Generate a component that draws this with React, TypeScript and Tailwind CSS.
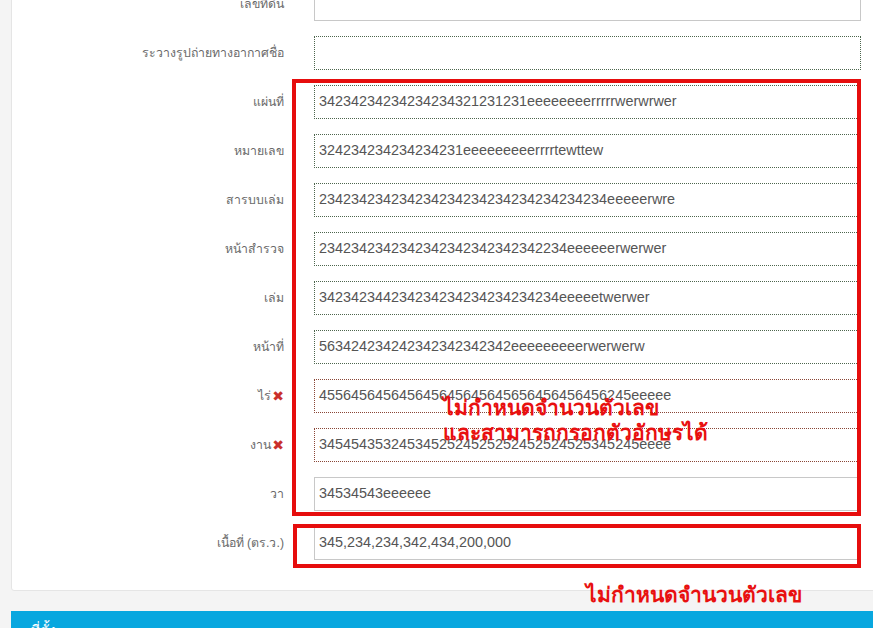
import React from "react";

type Row = { label: string; value: string; kind: "solid" | "green" | "brown"; req?: boolean };

const rows: Row[] = [
  { label: "เลขที่ดิน", value: "", kind: "solid" },
  { label: "ระวางรูปถ่ายทางอากาศชื่อ", value: "", kind: "green" },
  { label: "แผ่นที่", value: "34234234234234234321231231eeeeeeeerrrrrwerwrwer", kind: "green" },
  { label: "หมายเลข", value: "324234234234234231eeeeeeeeerrrrtewttew", kind: "green" },
  { label: "สารบบเล่ม", value: "234234234234234234234234234234234234eeeeerwre", kind: "green" },
  { label: "หน้าสำรวจ", value: "2342342342342342342342342342234eeeeeerwerwer", kind: "green" },
  { label: "เล่ม", value: "342342344234234234234234234234eeeeetwerwer", kind: "green" },
  { label: "หน้าที่", value: "563424234242342342342342eeeeeeeeerwerwerw", kind: "green" },
  { label: "ไร่", value: "455645645645645645645645656456456456245eeeee", kind: "brown", req: true },
  { label: "งาน", value: "3454543532453452524525252452524525345245eeee", kind: "brown", req: true },
  { label: "วา", value: "34534543eeeeee", kind: "solid" },
  { label: "เนื้อที่ (ตร.ว.)", value: "345,234,234,342,434,200,000", kind: "solid" },
];

const borderFor = (k: Row["kind"]) =>
  k === "solid"
    ? "border border-solid border-[#c8c8c8]"
    : k === "green"
    ? "border border-dotted border-[#4d654d]"
    : "border border-dotted border-[#8a4636]";

export default function App() {
  return (
    <div
      className="relative w-[873px] h-[628px] overflow-hidden bg-[#f4f4f4]"
      style={{ fontFamily: '"Liberation Sans", "Noto Sans", Arial, sans-serif' }}
    >
      <div className="ml-[11px] -mt-[14px] w-[900px] bg-white border border-[#e5e5e5] rounded-[3px] pb-[30px]">
        <div className="flex flex-col gap-[15px]">
          {rows.map((r, i) => (
            <div key={i} className="flex items-center h-[34px]">
              <div className="w-[272px] shrink-0 text-right text-[12.3px] text-[#6a6a6a] flex justify-end items-center">
                <span>{r.label}</span>
                {r.req && (
                  <span
                    className="text-[#c9302c] text-[14px] font-bold leading-none ml-[1px]"
                    style={{ fontFamily: '"DejaVu Sans", sans-serif' }}
                  >
                    ✖
                  </span>
                )}
              </div>
              <div
                className={`ml-[30px] w-[547px] h-[34px] shrink-0 bg-white flex items-center px-[4px] text-[14.4px] text-[#555] ${borderFor(
                  r.kind
                )}`}
              >
                {r.value}
              </div>
            </div>
          ))}
        </div>
      </div>
      <div className="ml-[11px] mt-[20px] w-[900px] h-[40px] bg-[#08a7df] pl-[20px] pt-[9px] text-white text-[14px]">
        ที่ตั้ง
      </div>

      {/* annotation overlays */}
      <div className="absolute left-[292px] top-[79px] w-[569px] h-[437px] border-[4px] border-[#e60d0d]" />
      <div className="absolute left-[293px] top-[524px] w-[568px] h-[44px] border-[4px] border-[#e60d0d]" />
      <div
        className="absolute left-[443px] top-[395px] text-[#e81010] font-extrabold text-[21px] leading-[25px]"
        style={{ fontFamily: '"Noto Sans", "DejaVu Sans", sans-serif' }}
      >
        <div>ไม่กำหนดจำนวนตัวเลข</div>
        <div>และสามารถกรอกตัวอักษรได้</div>
      </div>
      <div
        className="absolute left-[586px] top-[582px] text-[#e81010] font-extrabold text-[21px] leading-[25px]"
        style={{ fontFamily: '"Noto Sans", "DejaVu Sans", sans-serif' }}
      >
        ไม่กำหนดจำนวนตัวเลข
      </div>
    </div>
  );
}
